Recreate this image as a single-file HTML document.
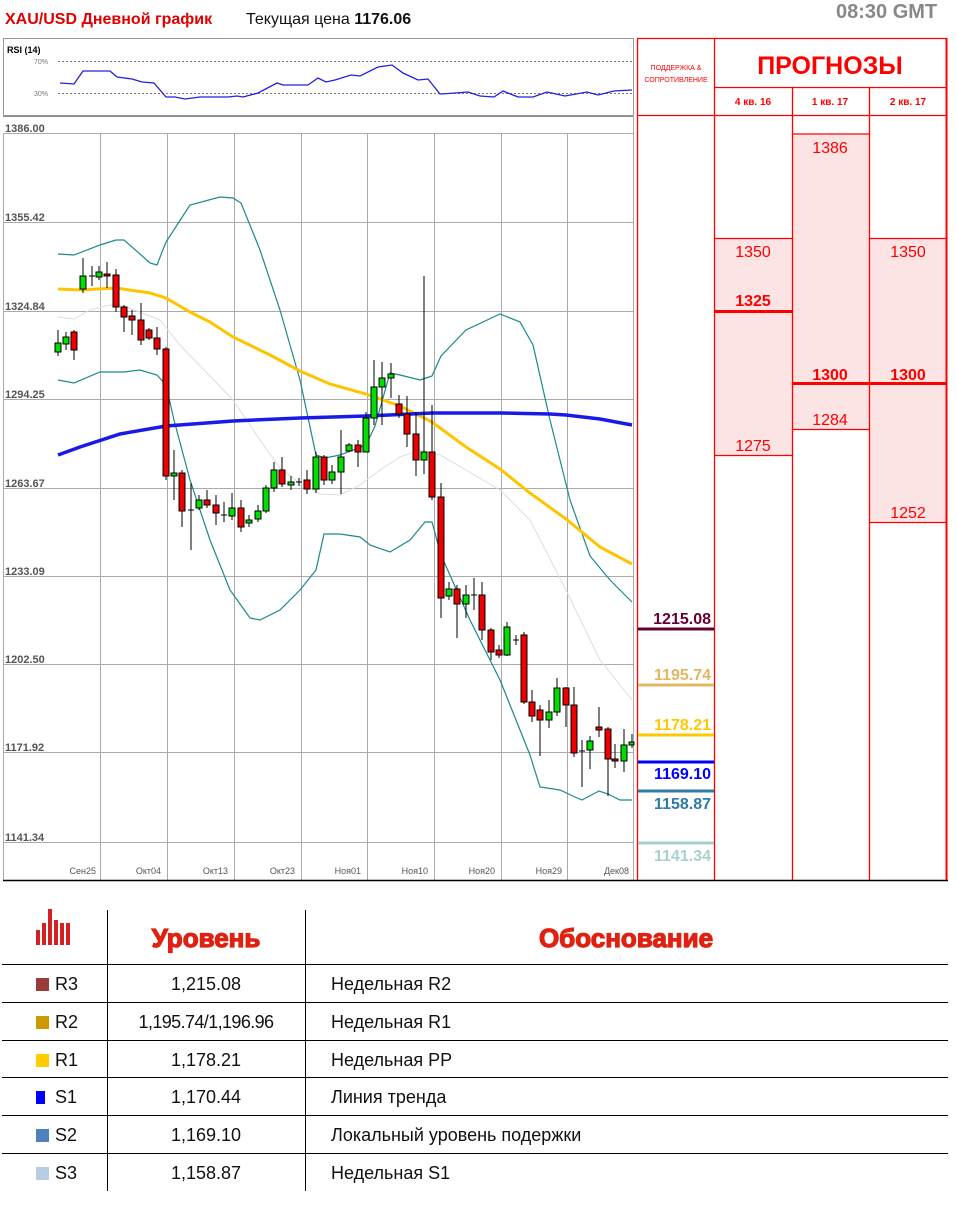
<!DOCTYPE html>
<html><head><meta charset="utf-8">
<style>
*{margin:0;padding:0;box-sizing:border-box}
body{width:957px;height:1209px;background:#fff;position:relative;overflow:hidden;font-family:"Liberation Sans","DejaVu Sans",sans-serif}
.a{position:absolute;white-space:nowrap}
.row{position:absolute;left:3px;width:945px;height:38px;font-size:18px;color:#111}
.row div{position:absolute;top:0;line-height:38px}
.sq{position:absolute;width:13px;height:13px;left:33px;top:13px}
</style></head><body>
<div class="a" style="left:5px;top:11px;font-size:16px;font-weight:bold;color:#e00000">XAU/USD Дневной график</div>
<div class="a" style="left:246px;top:11px;font-size:16px;color:#111">Текущая цена <b>1176.06</b></div>
<div class="a" style="left:836px;top:1px;font-size:20px;font-weight:bold;color:#888">08:30 GMT</div>

<svg class="a" style="left:0;top:0" width="957" height="1209" xmlns="http://www.w3.org/2000/svg">
<rect x="3.5" y="38.5" width="630" height="77" fill="#fff" stroke="#999"/>
<text x="7" y="53" font-size="9" font-weight="bold" font-family="Liberation Sans">RSI (14)</text>
<text x="34" y="64" font-size="7" fill="#777" font-family="Liberation Sans">70%</text>
<text x="34" y="96" font-size="7" fill="#777" font-family="Liberation Sans">30%</text>
<line x1="58" y1="61.5" x2="633" y2="61.5" stroke="#777" stroke-dasharray="2,2"/>
<line x1="58" y1="93.5" x2="633" y2="93.5" stroke="#777" stroke-dasharray="2,2"/>
<polyline fill="none" stroke="#2020e0" stroke-width="1.3" points="60,83 74,84 83,71 110,71 117,77 132,79 142,82 154,83 166,97 175,97 185,99 200,97 228,97 237,96 243,97 258,93 277,83 283,85 308,85 318,78 326,82 335,80 351,75 360,76 378,67 392,65 403,73 418,80 428,79 440,94 456,93 468,92 480,96 494,97 503,91 518,97 533,97 547,92 565,96 587,92 598,95 614,91 632,90"/>
<g stroke="#aaa" stroke-width="1">
<line x1="3" y1="116.5" x2="633" y2="116.5" stroke="#888"/>
<line x1="3" y1="133.5" x2="633" y2="133.5"/>
<line x1="3" y1="222.5" x2="633" y2="222.5"/>
<line x1="3" y1="311.5" x2="633" y2="311.5"/>
<line x1="3" y1="399.5" x2="633" y2="399.5"/>
<line x1="3" y1="488.5" x2="633" y2="488.5"/>
<line x1="3" y1="576.5" x2="633" y2="576.5"/>
<line x1="3" y1="664.5" x2="633" y2="664.5"/>
<line x1="3" y1="752.5" x2="633" y2="752.5"/>
<line x1="3" y1="842.5" x2="633" y2="842.5"/>
<line x1="3.5" y1="133" x2="3.5" y2="880"/>
<line x1="100.5" y1="133" x2="100.5" y2="880"/>
<line x1="167.5" y1="133" x2="167.5" y2="880"/>
<line x1="234.5" y1="133" x2="234.5" y2="880"/>
<line x1="301.5" y1="133" x2="301.5" y2="880"/>
<line x1="367.5" y1="133" x2="367.5" y2="880"/>
<line x1="434.5" y1="133" x2="434.5" y2="880"/>
<line x1="501.5" y1="133" x2="501.5" y2="880"/>
<line x1="567.5" y1="133" x2="567.5" y2="880"/>
<line x1="633.5" y1="116" x2="633.5" y2="880"/>
</g>
<g font-family="Liberation Sans" font-size="11" fill="#555" font-weight="bold">
<text x="5" y="132">1386.00</text><text x="5" y="221">1355.42</text><text x="5" y="310">1324.84</text><text x="5" y="398">1294.25</text><text x="5" y="487">1263.67</text><text x="5" y="575">1233.09</text><text x="5" y="663">1202.50</text><text x="5" y="751">1171.92</text><text x="5" y="841">1141.34</text>
</g>
<g font-family="Liberation Sans" font-size="9" fill="#555" text-anchor="end">
<text x="96" y="874">Сен25</text><text x="161" y="874">Окт04</text><text x="228" y="874">Окт13</text><text x="295" y="874">Окт23</text><text x="361" y="874">Ноя01</text><text x="428" y="874">Ноя10</text><text x="495" y="874">Ноя20</text><text x="562" y="874">Ноя29</text><text x="629" y="874">Дек08</text>
</g>
<line x1="3" y1="880.5" x2="948" y2="880.5" stroke="#000" stroke-width="1.5"/>
<polyline fill="none" stroke="#ddd" stroke-width="1" points="58,317 74,319 90,310 110,305 124,306 160,320 180,345 233,400 260,440 280,468 300,483 320,494 340,495 360,485 380,470 400,457 420,450 440,455 466,470 500,490 530,520 566,590 600,660 632,700"/>
<polyline fill="none" stroke="#1a8a8a" stroke-width="1.2" points="58,254 74,255 100,245 116,240 124,240 140,254 150,263 157,265 166,242 190,205 220,197 233,198 241,203 260,250 280,310 300,380 316,455 325,458 340,455 366,445 375,426 390,373 400,375 420,380 432,376 441,356 466,330 500,314 520,322 533,345 550,420 570,500 590,556 610,580 632,602"/>
<polyline fill="none" stroke="#1a8a8a" stroke-width="1.2" points="58,380 74,383 100,372 124,372 140,370 157,375 166,385 174,420 190,480 210,540 230,590 250,618 260,620 280,610 300,590 316,570 324,534 340,534 360,537 370,545 390,552 410,540 425,522 432,522 441,555 470,620 500,680 516,720 530,755 540,787 560,790 575,797 582,800 599,791 608,794 620,800 632,800"/>
<polyline fill="none" stroke="#ffc400" stroke-width="3" points="58,289 80,290 116,288 150,293 166,298 190,312 210,322 233,337 270,355 300,371 330,384 366,394 400,406 432,422 466,447 500,469 530,493 566,519 600,547 632,564"/>
<polyline fill="none" stroke="#1a1ae8" stroke-width="3.5" points="58,455 80,447 120,434 166,426 233,421 300,418 366,416 432,413 500,413 550,414 566,415 600,419 632,425"/>
<g stroke="#000" stroke-width="1">
<line x1="58" y1="330" x2="58" y2="356"/><rect x="55" y="343" width="6" height="9" fill="#0d0"/>
<line x1="66" y1="332" x2="66" y2="350"/><rect x="63" y="337" width="6" height="7" fill="#0d0"/>
<line x1="74" y1="330" x2="74" y2="360"/><rect x="71" y="332" width="6" height="18" fill="#e00"/>
<line x1="83" y1="258" x2="83" y2="293"/><rect x="80" y="276" width="6" height="13" fill="#0d0"/>
<line x1="92" y1="266" x2="92" y2="286"/><line x1="89" y1="276" x2="95" y2="276"/>
<line x1="99" y1="266" x2="99" y2="280"/><rect x="96" y="272" width="6" height="5" fill="#0d0"/>
<line x1="107" y1="262" x2="107" y2="288"/><rect x="104" y="274" width="6" height="2" fill="#e00"/>
<line x1="116" y1="269" x2="116" y2="312"/><rect x="113" y="275" width="6" height="32" fill="#e00"/>
<line x1="124" y1="305" x2="124" y2="332"/><rect x="121" y="307" width="6" height="10" fill="#e00"/>
<line x1="132" y1="310" x2="132" y2="335"/><rect x="129" y="316" width="6" height="4" fill="#e00"/>
<line x1="141" y1="303" x2="141" y2="345"/><rect x="138" y="320" width="6" height="20" fill="#e00"/>
<line x1="149" y1="328" x2="149" y2="340"/><rect x="146" y="330" width="6" height="8" fill="#e00"/>
<line x1="157" y1="327" x2="157" y2="355"/><rect x="154" y="338" width="6" height="11" fill="#e00"/>
<line x1="166" y1="347" x2="166" y2="480"/><rect x="163" y="349" width="6" height="127" fill="#e00"/>
<line x1="174" y1="450" x2="174" y2="500"/><rect x="171" y="473" width="6" height="3" fill="#0d0"/>
<line x1="182" y1="470" x2="182" y2="527"/><rect x="179" y="473" width="6" height="38" fill="#e00"/>
<line x1="191" y1="483" x2="191" y2="550"/><line x1="188" y1="510" x2="194" y2="510"/>
<line x1="199" y1="495" x2="199" y2="510"/><rect x="196" y="500" width="6" height="8" fill="#0d0"/>
<line x1="207" y1="490" x2="207" y2="508"/><rect x="204" y="500" width="6" height="5" fill="#e00"/>
<line x1="216" y1="495" x2="216" y2="525"/><rect x="213" y="505" width="6" height="8" fill="#e00"/>
<line x1="224" y1="502" x2="224" y2="522"/><line x1="221" y1="515" x2="227" y2="515"/>
<line x1="232" y1="493" x2="232" y2="520"/><rect x="229" y="508" width="6" height="8" fill="#0d0"/>
<line x1="241" y1="500" x2="241" y2="532"/><rect x="238" y="508" width="6" height="19" fill="#e00"/>
<line x1="249" y1="515" x2="249" y2="527"/><rect x="246" y="520" width="6" height="3" fill="#0d0"/>
<line x1="258" y1="505" x2="258" y2="522"/><rect x="255" y="511" width="6" height="8" fill="#0d0"/>
<line x1="266" y1="485" x2="266" y2="513"/><rect x="263" y="488" width="6" height="23" fill="#0d0"/>
<line x1="274" y1="462" x2="274" y2="492"/><rect x="271" y="470" width="6" height="18" fill="#0d0"/>
<line x1="282" y1="457" x2="282" y2="487"/><rect x="279" y="470" width="6" height="14" fill="#e00"/>
<line x1="291" y1="476" x2="291" y2="490"/><rect x="288" y="482" width="6" height="3" fill="#0d0"/>
<line x1="299" y1="478" x2="299" y2="486"/><line x1="296" y1="482" x2="302" y2="482"/>
<line x1="307" y1="470" x2="307" y2="494"/><rect x="304" y="480" width="6" height="9" fill="#e00"/>
<line x1="316" y1="452" x2="316" y2="493"/><rect x="313" y="457" width="6" height="32" fill="#0d0"/>
<line x1="324" y1="455" x2="324" y2="485"/><rect x="321" y="457" width="6" height="23" fill="#e00"/>
<line x1="332" y1="465" x2="332" y2="484"/><rect x="329" y="472" width="6" height="8" fill="#0d0"/>
<line x1="341" y1="430" x2="341" y2="494"/><rect x="338" y="457" width="6" height="15" fill="#0d0"/>
<line x1="349" y1="443" x2="349" y2="452"/><rect x="346" y="445" width="6" height="6" fill="#0d0"/>
<line x1="358" y1="440" x2="358" y2="467"/><rect x="355" y="445" width="6" height="7" fill="#e00"/>
<line x1="366" y1="412" x2="366" y2="452"/><rect x="363" y="418" width="6" height="34" fill="#0d0"/>
<line x1="374" y1="360" x2="374" y2="425"/><rect x="371" y="387" width="6" height="31" fill="#0d0"/>
<line x1="382" y1="362" x2="382" y2="425"/><rect x="379" y="378" width="6" height="9" fill="#0d0"/>
<line x1="391" y1="363" x2="391" y2="398"/><rect x="388" y="374" width="6" height="4" fill="#0d0"/>
<line x1="399" y1="395" x2="399" y2="418"/><rect x="396" y="404" width="6" height="10" fill="#e00"/>
<line x1="407" y1="396" x2="407" y2="447"/><rect x="404" y="414" width="6" height="20" fill="#e00"/>
<line x1="416" y1="412" x2="416" y2="476"/><rect x="413" y="434" width="6" height="26" fill="#e00"/>
<line x1="424" y1="276" x2="424" y2="474"/><rect x="421" y="452" width="6" height="8" fill="#0d0"/>
<line x1="432" y1="405" x2="432" y2="500"/><rect x="429" y="452" width="6" height="45" fill="#e00"/>
<line x1="441" y1="483" x2="441" y2="618"/><rect x="438" y="497" width="6" height="101" fill="#e00"/>
<line x1="449" y1="582" x2="449" y2="600"/><rect x="446" y="589" width="6" height="7" fill="#0d0"/>
<line x1="457" y1="585" x2="457" y2="638"/><rect x="454" y="589" width="6" height="15" fill="#e00"/>
<line x1="466" y1="585" x2="466" y2="618"/><rect x="463" y="595" width="6" height="9" fill="#0d0"/>
<line x1="474" y1="578" x2="474" y2="610"/><line x1="471" y1="595" x2="477" y2="595"/>
<line x1="482" y1="582" x2="482" y2="640"/><rect x="479" y="595" width="6" height="35" fill="#e00"/>
<line x1="491" y1="628" x2="491" y2="660"/><rect x="488" y="630" width="6" height="22" fill="#e00"/>
<line x1="499" y1="645" x2="499" y2="658"/><rect x="496" y="650" width="6" height="5" fill="#e00"/>
<line x1="507" y1="622" x2="507" y2="656"/><rect x="504" y="627" width="6" height="28" fill="#0d0"/>
<line x1="516" y1="635" x2="516" y2="645"/><line x1="513" y1="640" x2="519" y2="640"/>
<line x1="524" y1="632" x2="524" y2="704"/><rect x="521" y="635" width="6" height="67" fill="#e00"/>
<line x1="532" y1="690" x2="532" y2="722"/><rect x="529" y="702" width="6" height="14" fill="#e00"/>
<line x1="540" y1="705" x2="540" y2="756"/><rect x="537" y="710" width="6" height="10" fill="#e00"/>
<line x1="549" y1="700" x2="549" y2="728"/><rect x="546" y="712" width="6" height="8" fill="#0d0"/>
<line x1="557" y1="678" x2="557" y2="716"/><rect x="554" y="688" width="6" height="24" fill="#0d0"/>
<line x1="566" y1="687" x2="566" y2="727"/><rect x="563" y="688" width="6" height="17" fill="#e00"/>
<line x1="574" y1="687" x2="574" y2="757"/><rect x="571" y="705" width="6" height="48" fill="#e00"/>
<line x1="582" y1="740" x2="582" y2="787"/><line x1="579" y1="751" x2="585" y2="751"/>
<line x1="590" y1="736" x2="590" y2="769"/><rect x="587" y="741" width="6" height="9" fill="#0d0"/>
<line x1="599" y1="707" x2="599" y2="737"/><rect x="596" y="727" width="6" height="3" fill="#e00"/>
<line x1="608" y1="727" x2="608" y2="796"/><rect x="605" y="729" width="6" height="30" fill="#e00"/>
<line x1="615" y1="744" x2="615" y2="768"/><rect x="612" y="759" width="6" height="2" fill="#e00"/>
<line x1="624" y1="729" x2="624" y2="772"/><rect x="621" y="745" width="6" height="16" fill="#0d0"/>
<line x1="632" y1="734" x2="632" y2="748"/><rect x="629" y="742" width="5" height="3" fill="#0d0"/>
</g>
<rect x="792" y="134" width="77" height="295" fill="#fde4e4"/>
<rect x="714" y="238" width="78" height="217" fill="#fde4e4"/>
<rect x="869" y="238" width="77" height="284" fill="#fde4e4"/>
<g stroke="#f00" stroke-width="1.3">
<line x1="637.5" y1="38" x2="637.5" y2="880"/>
<line x1="714.5" y1="38" x2="714.5" y2="880"/>
<line x1="792.5" y1="87" x2="792.5" y2="880"/>
<line x1="869.5" y1="87" x2="869.5" y2="880"/>
<line x1="946.5" y1="38" x2="946.5" y2="880" stroke-width="2"/>
<line x1="637" y1="38.5" x2="947" y2="38.5"/>
<line x1="714" y1="87.5" x2="947" y2="87.5"/>
<line x1="637" y1="115.5" x2="947" y2="115.5"/>
<line x1="792" y1="134" x2="869" y2="134"/>
<line x1="714" y1="238.5" x2="792" y2="238.5"/>
<line x1="869" y1="238.5" x2="947" y2="238.5"/>
<line x1="714" y1="311.5" x2="792" y2="311.5" stroke-width="3"/>
<line x1="714" y1="455.5" x2="792" y2="455.5"/>
<line x1="792" y1="383.5" x2="947" y2="383.5" stroke-width="3"/>
<line x1="792" y1="429.5" x2="869" y2="429.5"/>
<line x1="869" y1="522.5" x2="947" y2="522.5"/>
</g>
<g font-family="Liberation Sans" fill="#f00" text-anchor="middle">
<text x="676" y="70" font-size="7">ПОДДЕРЖКА &amp;</text>
<text x="676" y="82" font-size="7">СОПРОТИВЛЕНИЕ</text>
<text x="830" y="74" font-size="25" font-weight="bold">ПРОГНОЗЫ</text>
<text x="753" y="105" font-size="10" font-weight="bold">4 кв. 16</text>
<text x="830" y="105" font-size="10" font-weight="bold">1 кв. 17</text>
<text x="908" y="105" font-size="10" font-weight="bold">2 кв. 17</text>
<g font-size="16">
<text x="753" y="257">1350</text><text x="753" y="306" font-weight="bold">1325</text><text x="753" y="451">1275</text>
<text x="830" y="153">1386</text><text x="830" y="380" font-weight="bold">1300</text><text x="830" y="425">1284</text>
<text x="908" y="257">1350</text><text x="908" y="380" font-weight="bold">1300</text><text x="908" y="518">1252</text>
</g>
</g>
<g font-family="Liberation Sans" font-size="16" font-weight="bold" text-anchor="end">
<line x1="638" y1="629" x2="714" y2="629" stroke="#660033" stroke-width="3"/><text x="711" y="624" fill="#660033">1215.08</text>
<line x1="638" y1="685" x2="714" y2="685" stroke="#e0b860" stroke-width="3"/><text x="711" y="680" fill="#e0b860">1195.74</text>
<line x1="638" y1="735" x2="714" y2="735" stroke="#ffc800" stroke-width="3"/><text x="711" y="730" fill="#ffc800">1178.21</text>
<line x1="638" y1="762" x2="714" y2="762" stroke="#0000ff" stroke-width="3"/><text x="711" y="779" fill="#0000ff">1169.10</text>
<line x1="638" y1="791" x2="714" y2="791" stroke="#2e7ba6" stroke-width="3"/><text x="711" y="809" fill="#2e7ba6">1158.87</text>
<line x1="638" y1="843" x2="714" y2="843" stroke="#a8d0d0" stroke-width="3"/><text x="711" y="861" fill="#a8d0d0">1141.34</text>
</g>
<g fill="#d42020">
<rect x="36" y="930" width="4" height="15"/><rect x="42" y="923" width="4" height="22"/><rect x="48" y="909" width="4" height="36"/><rect x="54" y="920" width="4" height="25"/><rect x="60" y="923" width="4" height="22"/><rect x="66" y="923" width="4" height="22"/>
</g>
<g stroke="#000" stroke-width="1">
<line x1="107.5" y1="910" x2="107.5" y2="1191"/>
<line x1="305.5" y1="910" x2="305.5" y2="1191"/>
<line x1="2" y1="964.5" x2="948" y2="964.5"/>
<line x1="2" y1="1002.5" x2="948" y2="1002.5"/>
<line x1="2" y1="1040.5" x2="948" y2="1040.5"/>
<line x1="2" y1="1077.5" x2="948" y2="1077.5"/>
<line x1="2" y1="1115.5" x2="948" y2="1115.5"/>
<line x1="2" y1="1153.5" x2="948" y2="1153.5"/>
</g>
<g font-family="Liberation Sans" font-weight="bold" font-size="26" fill="#e02010" stroke="#e02010" stroke-width="1.2" text-anchor="middle">
<text x="206" y="947">Уровень</text><text x="626" y="947">Обоснование</text>
</g>
</svg>

<div class="row" style="top:965px"><span class="sq" style="background:#9b3a3a"></span><div style="left:52px">R3</div><div style="left:104px;width:198px;text-align:center">1,215.08</div><div style="left:328px">Недельная R2</div></div>
<div class="row" style="top:1003px"><span class="sq" style="background:#cc9900"></span><div style="left:52px">R2</div><div style="left:104px;width:198px;text-align:center;letter-spacing:-0.6px">1,195.74/1,196.96</div><div style="left:328px">Недельная R1</div></div>
<div class="row" style="top:1041px"><span class="sq" style="background:#ffcc00"></span><div style="left:52px">R1</div><div style="left:104px;width:198px;text-align:center">1,178.21</div><div style="left:328px">Недельная PP</div></div>
<div class="row" style="top:1078px"><span class="sq" style="background:#0000ff;width:9px"></span><div style="left:52px">S1</div><div style="left:104px;width:198px;text-align:center">1,170.44</div><div style="left:328px">Линия тренда</div></div>
<div class="row" style="top:1116px"><span class="sq" style="background:#4f81bd"></span><div style="left:52px">S2</div><div style="left:104px;width:198px;text-align:center">1,169.10</div><div style="left:328px">Локальный уровень подержки</div></div>
<div class="row" style="top:1154px"><span class="sq" style="background:#b8cce4"></span><div style="left:52px">S3</div><div style="left:104px;width:198px;text-align:center">1,158.87</div><div style="left:328px">Недельная S1</div></div>
</body></html>
